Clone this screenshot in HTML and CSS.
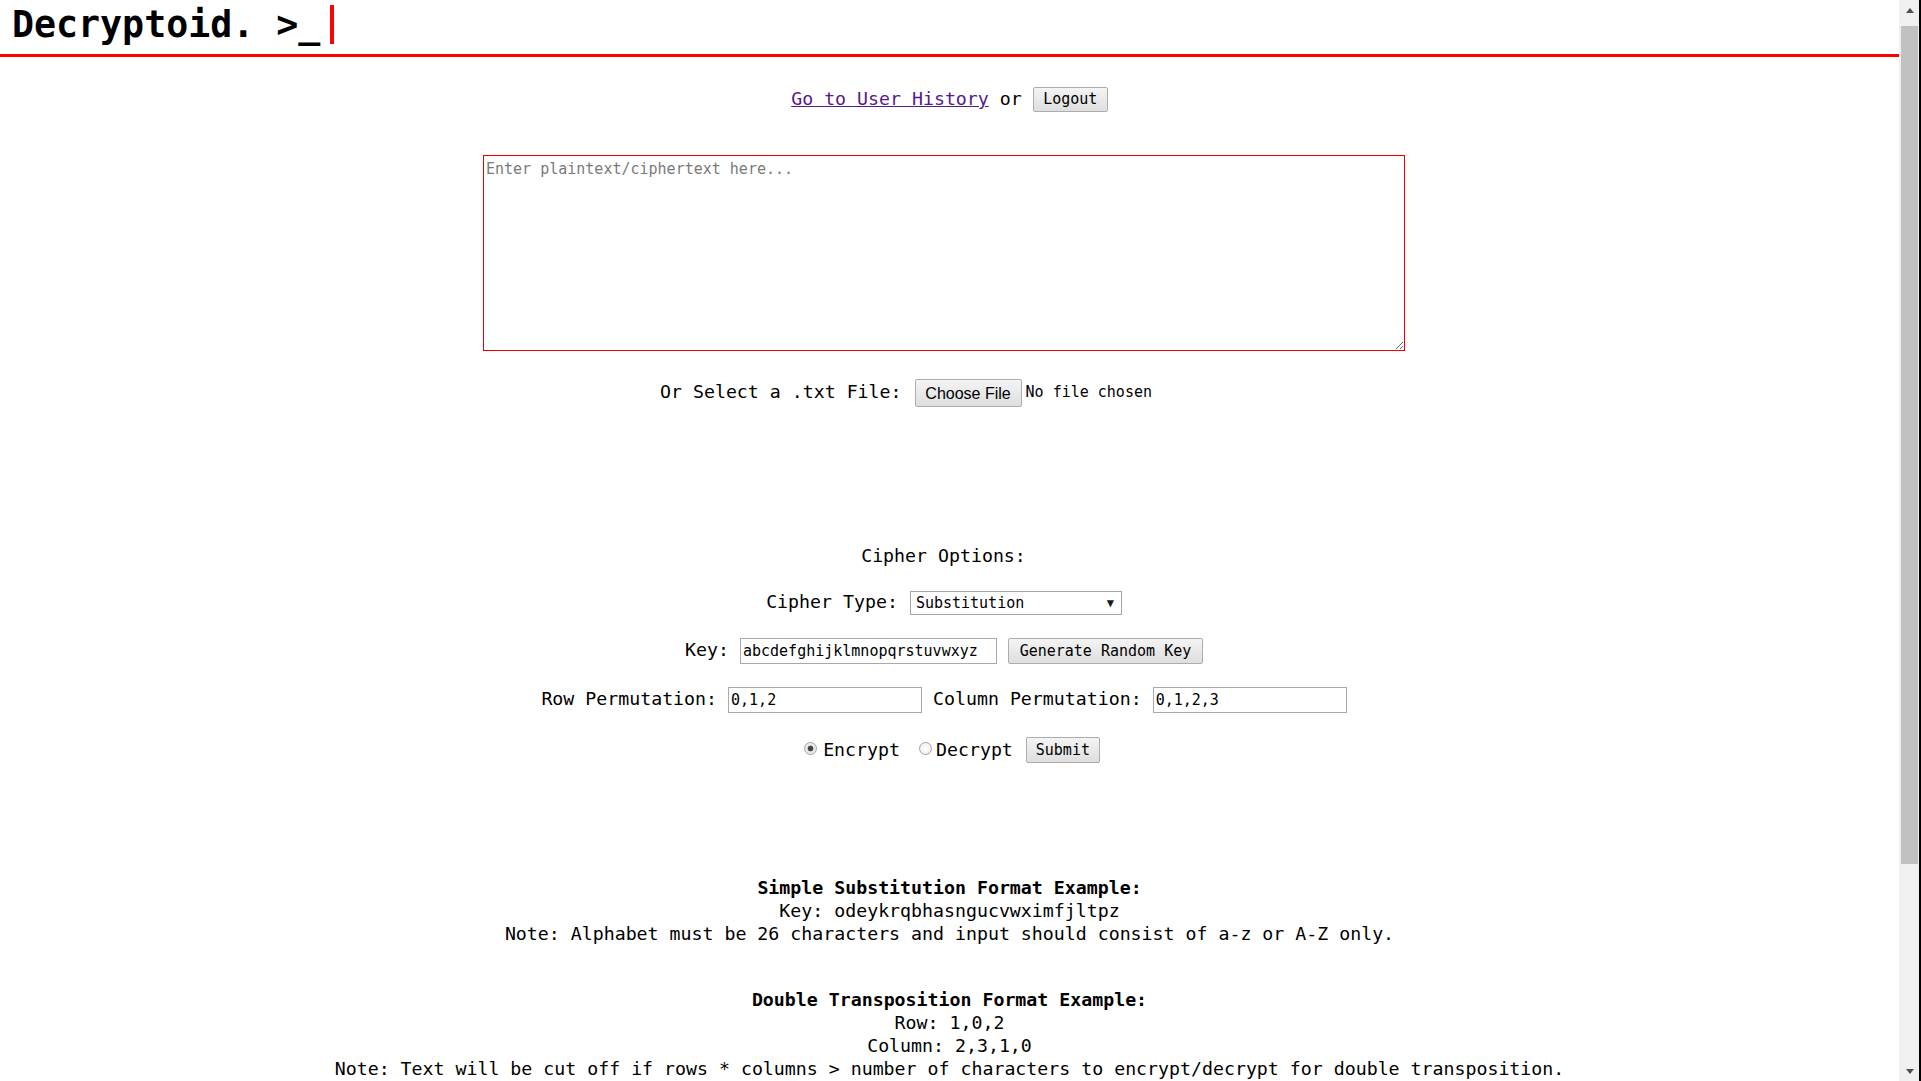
FILE: index.html
```html
<!DOCTYPE html>
<html lang="en">
<head>
<meta charset="utf-8">
<title>Decryptoid</title>
<link rel="stylesheet" href="styles.css">
</head>
<body>
<div class="window">
  <div class="viewport">
    <header class="brand">
      <h1 class="brand-name">Decryptoid. &gt;_</h1>
      <span class="brand-cursor"></span>
    </header>

    <nav class="userbar">
      <a class="history-link" href="#">Go to User History</a>
      <span class="or">or</span>
      <button class="btn btn-logout" type="button">Logout</button>
    </nav>

    <form class="cipher-form">
      <div class="editor-row">
        <textarea class="editor" placeholder="Enter plaintext/ciphertext here..."></textarea>
      </div>

      <div class="file-row">
        <span class="label file-label">Or Select a .txt File:</span>
        <span class="file-btn">Choose File</span>
        <span class="file-name">No file chosen</span>
      </div>

      <div class="options-title">Cipher Options:</div>

      <div class="opt-row row-type">
        <span class="label">Cipher Type:</span>
        <div class="select">
          <span class="select-value">Substitution</span>
          <span class="select-arrow">&#9660;</span>
        </div>
      </div>

      <div class="opt-row row-key">
        <span class="label">Key:</span>
        <input class="field field-key" type="text" value="abcdefghijklmnopqrstuvwxyz">
        <button class="btn btn-gen" type="button">Generate Random Key</button>
      </div>

      <div class="opt-row row-perm">
        <span class="label">Row Permutation:</span>
        <input class="field field-perm" type="text" value="0,1,2">
        <span class="label">Column Permutation:</span>
        <input class="field field-perm" type="text" value="0,1,2,3">
      </div>

      <div class="opt-row row-mode">
        <input class="radio radio-on" type="radio" name="mode" checked>
        <span class="label mode-label">Encrypt</span>
        <input class="radio radio-second" type="radio" name="mode">
        <span class="label mode-label mode-label-last">Decrypt</span>
        <button class="btn btn-submit" type="button">Submit</button>
      </div>
    </form>

    <section class="examples">
      <div class="example-block">
        <div class="example-title">Simple Substitution Format Example:</div>
        <div>Key: odeykrqbhasngucvwximfjltpz</div>
        <div>Note: Alphabet must be 26 characters and input should consist of a-z or A-Z only.</div>
      </div>
      <div class="example-block example-block-second">
        <div class="example-title">Double Transposition Format Example:</div>
        <div>Row: 1,0,2</div>
        <div>Column: 2,3,1,0</div>
        <div>Note: Text will be cut off if rows * columns &gt; number of characters to encrypt/decrypt for double transposition.</div>
      </div>
    </section>
  </div>

  <div class="scrollbar">
    <div class="sb-btn sb-up"><span class="tri tri-up"></span></div>
    <div class="sb-track"><div class="sb-thumb"></div></div>
    <div class="sb-btn sb-down"><span class="tri tri-down"></span></div>
  </div>
  <div class="edge"></div>
</div>
</body>
</html>
```

FILE: styles.css
```css
* {
  box-sizing: border-box;
}

html,
body {
  margin: 0;
  padding: 0;
  background: #ffffff;
}

body {
  font-family: "DejaVu Sans Mono", "Liberation Mono", monospace;
  font-size: 18.24px;
  line-height: 23px;
  color: #000000;
  overflow: hidden;
}

.window {
  display: flex;
  width: 1921px;
  height: 1081px;
  overflow: hidden;
}

.viewport {
  width: 1899px;
  flex: none;
}

/* Header */
.brand {
  display: flex;
  align-items: flex-start;
  height: 57px;
  padding: 3px 0 8px 12px;
  border-bottom: 3px solid #ff0000;
}

.brand-name {
  margin: 0;
  font-size: 36.6px;
  line-height: 43px;
  font-weight: bold;
}

.brand-cursor {
  width: 4px;
  height: 39px;
  margin: 2px 0 0 10px;
  background: #ff0000;
}

/* User bar */
.userbar {
  display: flex;
  justify-content: center;
  align-items: center;
  gap: 11px;
  height: 25px;
  margin-top: 29px;
}

.history-link {
  color: #551a8b;
  text-decoration: underline;
}

/* Buttons */
.btn {
  font-family: "DejaVu Sans Mono", "Liberation Mono", monospace;
  font-size: 15px;
  line-height: 18px;
  color: #000000;
  padding: 0;
  border: 1px solid #adadad;
  border-radius: 2px;
  background: linear-gradient(#f4f4f4, #dedede);
}

.btn-logout {
  width: 75px;
  height: 25px;
  margin-top: 1px;
}

.btn-gen {
  width: 195px;
  height: 26px;
}

.btn-submit {
  width: 74px;
  height: 26px;
}

/* Editor */
.editor-row {
  display: flex;
  justify-content: center;
  padding-right: 11px;
  margin-top: 44px;
}

.editor {
  display: block;
  width: 922px;
  height: 196px;
  margin: 0;
  padding: 4px 2px 2px 2px;
  border: 1px solid #ee0000;
  font-family: "DejaVu Sans Mono", "Liberation Mono", monospace;
  font-size: 15px;
  line-height: 18px;
  outline: none;
}

.editor::placeholder {
  color: #7a7a7a;
}

/* File row */
.file-row {
  display: flex;
  justify-content: center;
  align-items: center;
  height: 28px;
  margin-top: 28px;
  padding-right: 87px;
}

.file-label {
  margin-right: 13px;
  margin-bottom: 4px;
}

.file-btn {
  display: flex;
  align-items: center;
  justify-content: center;
  width: 107px;
  height: 28px;
  font-family: "Liberation Sans", Arial, sans-serif;
  font-size: 16px;
  border: 1px solid #adadad;
  border-radius: 2px;
  background: linear-gradient(#f4f4f4, #dedede);
}

.file-name {
  margin-left: 4px;
  margin-bottom: 2px;
  font-size: 15px;
}

/* Options */
.options-title {
  margin-top: 137px;
  padding-right: 12px;
  text-align: center;
}

.opt-row {
  display: flex;
  justify-content: center;
  align-items: center;
}

.opt-row .label {
  margin-bottom: 3px;
}

.row-type {
  height: 24px;
  margin-top: 24px;
  padding-right: 11px;
  gap: 12px;
}

.select {
  display: flex;
  justify-content: space-between;
  align-items: center;
  width: 212px;
  height: 24px;
  padding: 0 7px 0 5px;
  border: 1px solid #a6a6a6;
  background: #ffffff;
  font-size: 15px;
}

.select-arrow {
  font-size: 12px;
  color: #1a1a1a;
}

.row-key {
  height: 27px;
  margin-top: 22px;
  padding-right: 11px;
  gap: 11px;
}

.field {
  height: 26px;
  margin: 0;
  padding: 1px 2px;
  border: 1px solid #a9a9a9;
  font-family: "DejaVu Sans Mono", "Liberation Mono", monospace;
  font-size: 15px;
  color: #000000;
  background: #ffffff;
  outline: none;
}

.field-key {
  width: 257px;
}

.field-perm {
  width: 194px;
}

.row-perm {
  height: 26px;
  margin-top: 23px;
  padding-right: 11px;
  gap: 11px;
}

.row-mode {
  height: 26px;
  margin-top: 24px;
  padding-left: 5px;
}

.row-mode .mode-label {
  margin-bottom: 1px;
}

.radio {
  appearance: none;
  -webkit-appearance: none;
  width: 13px;
  height: 13px;
  margin: 0 6px 3px 0;
  border: 1px solid #a2a2a2;
  border-radius: 50%;
  background: radial-gradient(circle, #ffffff 0, #e9e9e9 100%);
}

.radio-on {
  background: radial-gradient(circle, #454545 0, #454545 2.5px, #e4e4e4 3.2px, #f4f4f4 100%);
}

.radio-second {
  margin-left: 19px;
  margin-right: 4px;
}

.mode-label-last {
  margin-right: 13px;
}

/* Examples */
.examples {
  margin-top: 113px;
  text-align: center;
}

.example-title {
  font-weight: bold;
}

.example-block-second {
  margin-top: 43px;
}

/* Scrollbar */
.scrollbar {
  display: flex;
  flex-direction: column;
  width: 20px;
  flex: none;
  background: #f0f0f0;
}

.sb-btn {
  display: flex;
  align-items: center;
  justify-content: center;
  height: 20px;
  padding-left: 1px;
}

.tri {
  width: 0;
  height: 0;
  border-left: 4.5px solid transparent;
  border-right: 4.5px solid transparent;
}

.tri-up {
  border-bottom: 5px solid #505050;
}

.tri-down {
  border-top: 5px solid #505050;
}

.sb-track {
  flex: 1;
  padding: 6px 1px 0 2px;
}

.sb-thumb {
  height: 838px;
  background: #c1c1c1;
}

.edge {
  width: 2px;
  flex: none;
  background: #000000;
}
```
